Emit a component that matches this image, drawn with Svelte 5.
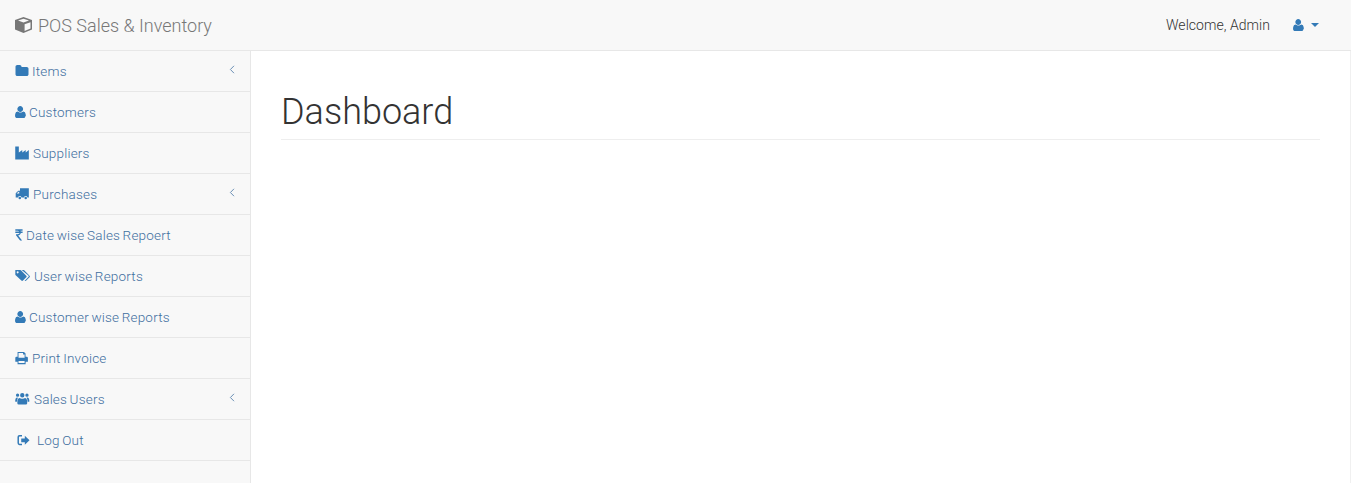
<script>
  const menu = [
    { icon: 'folder', label: 'Items', arrow: true },
    { icon: 'user', label: 'Customers' },
    { icon: 'industry', label: 'Suppliers' },
    { icon: 'truck', label: 'Purchases', arrow: true },
    { icon: 'rupee', label: 'Date wise Sales Repoert' },
    { icon: 'tags', label: 'User wise Reports' },
    { icon: 'user', label: 'Customer wise Reports' },
    { icon: 'print', label: 'Print Invoice' },
    { icon: 'users', label: 'Sales Users', arrow: true },
    { icon: 'signout', label: 'Log Out' }
  ];
  const icons = {
    folder: { w: 1792, d: 'M1728 608v704q0 92-66 158t-158 66h-1216q-92 0-158-66t-66-158v-960q0-92 66-158t158-66h320q92 0 158 66t66 158v32h672q92 0 158 66t66 158z' },
    user: { w: 1408, d: 'M1340 1405q0 120-73 189.5t-194 69.5h-800q-121 0-194-69.5t-73-189.5q0-53 3.5-103.5t14-109 26.5-108.5 43-97.5 62-81 85.5-53.5 111.5-20q9 0 42 21.5t74.5 48 108 48 118 21.5 118-21.5 108-48 74.5-48 42-21.5q61 0 111.5 20t85.5 53.5 62 81 43 97.5 26.5 108.5 14 109 3.5 103.5zM1040 512q0 159-112.5 271.5t-257.5 112.5-257.5-112.5-112.5-271.5 112.5-271.5 257.5-112.5 257.5 112.5 112.5 271.5z' },
    industry: { w: 1920, d: 'M30 60h460v760l440-320v320l440-320v320l400-320v1240H30z' },
    truck: { w: 1920, d: 'M640 150h1130v1180h-180a230 230 0 0 0-440 0H830a230 230 0 0 0-440 0H90V800l330-310h220zM230 840h310V600h-70L230 810zM610 1240a160 160 0 1 1 0 320a160 160 0 1 1 0-320zM1370 1240a160 160 0 1 1 0 320a160 160 0 1 1 0-320z' },
    rupee: { w: 1024, d: 'M40 170h930v190H690q35 50 45 90h235v190H745q-25 130-130 215t-215 95l510 640H650L130 940V800h190q130 0 190-50t75-110H40V450h500q-50-90-215-90H40z' },
    tags: { w: 2048, d: 'M40 130h620q60 0 100 40l680 680q50 50 50 110t-50 100l-420 420q-50 50-105 50t-100-50L90 800q-50-50-50-110zM340 300a130 130 0 1 0 0 260a130 130 0 1 0 0-260zM860 130h220q60 0 100 40l680 680q50 50 50 110t-50 100l-420 420q-45 45-105 50t-95-30l470-470q50-50 50-100t-50-100z' },
    print: { w: 1792, d: 'M330 130h820l200 200v400h150q150 0 150 150v490h-290v330H330v-330H40V880q0-150 150-150h140zm120 120v620h780V450h-200V250zM450 1270v280h780v-280z' },
    users: { w: 2048, d: 'M930 130a280 280 0 1 1 0 560a280 280 0 1 1 0-560zM330 190a210 210 0 1 1 0 420a210 210 0 1 1 0-420zM1530 190a210 210 0 1 1 0 420a210 210 0 1 1 0-420zM560 770l170 70q200 70 400 0l170-70q260 60 260 490v180q0 170-170 170H470q-170 0-170-170v-180q0-430 260-490zM30 1060q0-330 200-370l150 30q-130 150-140 540H90q-60 0-60-40zM1480 720l150-30q200 40 200 370v160q0 40-60 40h-150q-10-390-140-540z' },
    signout: { w: 1664, d: 'M640 240v200H340q-90 0-90 90v740q0 90 90 90h300v200H320q-260 0-260-270V510q0-270 260-270zM1000 360l600 570-600 570v-330H540V690h460z' }
  };
</script>

{#snippet icon(name)}
  <svg class="ic" viewBox="0 0 {icons[name].w} 1792" style="width:{(icons[name].w / 1792) * 14}px" aria-hidden="true">
    <path d={icons[name].d} fill-rule="evenodd" />
  </svg>
{/snippet}

<div class="page">
  <nav class="navbar">
    <a class="brand" href="#top">
      <svg class="cube" viewBox="0 0 17 16" aria-hidden="true">
        <path d="M8.5 0 17 3v9.6L8.5 16 0 12.6V3zM8.5 1.7 3 3.6l5.5 2 5.5-2zM9.6 7.2v6.8l5.9-2.4V5.2z" fill-rule="evenodd" />
      </svg>
      POS Sales &amp; Inventory
    </a>
    <div class="nav-right">
      <span class="welcome">Welcome, Admin</span>
      <span class="user-menu">
        {@render icon('user')}
        <span class="caret"></span>
      </span>
    </div>
  </nav>
  <div class="body">
    <aside class="sidebar">
      <ul>
        {#each menu as m}
          <li class:logout={m.icon === 'signout'}>
            <a href="#top">
              {@render icon(m.icon)}
              <span class="label">{m.label}</span>
              {#if m.arrow}
                <svg class="chev" viewBox="0 0 6 9" aria-hidden="true"><path d="M5 .8 1.4 4.5 5 8.2" /></svg>
              {/if}
            </a>
          </li>
        {/each}
      </ul>
    </aside>
    <main class="content">
      <h1>Dashboard</h1>
    </main>
  </div>
</div>

<style>
  :global(body) {
    margin: 0;
    background: #fff;
    overflow: hidden;
  }
  .page {
    height: 483px;
    display: flex;
    flex-direction: column;
    font-family: Roboto, "Liberation Sans", sans-serif;
    font-weight: 300;
    font-size: 14px;
    color: #333;
  }
  .navbar {
    height: 50px;
    flex: none;
    background: #f8f8f8;
    border-bottom: 1px solid #e7e7e7;
    display: flex;
    align-items: center;
    justify-content: space-between;
    padding: 0 32px 0 15px;
  }
  .brand {
    display: flex;
    align-items: center;
    gap: 6px;
    color: #777;
    font-size: 18px;
    text-decoration: none;
  }
  .cube {
    width: 17px;
    height: 16px;
    fill: #777;
  }
  .nav-right {
    display: flex;
    align-items: center;
    gap: 23px;
  }
  .welcome {
    color: #333;
    letter-spacing: 0.05px;
  }
  .user-menu {
    display: flex;
    align-items: center;
    gap: 7px;
  }
  .ic {
    height: 14px;
    flex: none;
    fill: #337ab7;
  }
  .caret {
    width: 0;
    height: 0;
    border-top: 4px solid #337ab7;
    border-left: 4px solid transparent;
    border-right: 4px solid transparent;
  }
  .body {
    flex: 1;
    display: flex;
    min-height: 0;
  }
  .sidebar {
    width: 250px;
    flex: none;
    background: #f8f8f8;
    border-right: 1px solid #e7e7e7;
  }
  ul {
    list-style: none;
    margin: 0;
    padding: 0;
  }
  li {
    border-bottom: 1px solid #e7e7e7;
  }
  li a {
    height: 40px;
    box-sizing: border-box;
    padding: 0 15px;
    display: flex;
    align-items: center;
    gap: 3px;
    color: #3f6f9f;
    text-decoration: none;
    position: relative;
  }
  .label {
    font-size: 13.5px;
    letter-spacing: 0.2px;
    word-spacing: -1px;
  }
  li.logout a {
    padding-left: 17px;
    gap: 7px;
  }
  .chev {
    position: absolute;
    right: 15px;
    top: 14px;
    width: 6px;
    height: 9px;
    fill: none;
    stroke: #6a8fb5;
    stroke-width: 1;
  }
  .content {
    flex: 1;
    padding: 0 30px;
    border-right: 1px solid #f0f0f0;
  }
  h1 {
    margin: 42px 0 20px;
    padding-bottom: 6.4px;
    border-bottom: 1px solid #eee;
    font-size: 36px;
    font-weight: 300;
    line-height: 39.6px;
    color: #333;
  }
</style>
